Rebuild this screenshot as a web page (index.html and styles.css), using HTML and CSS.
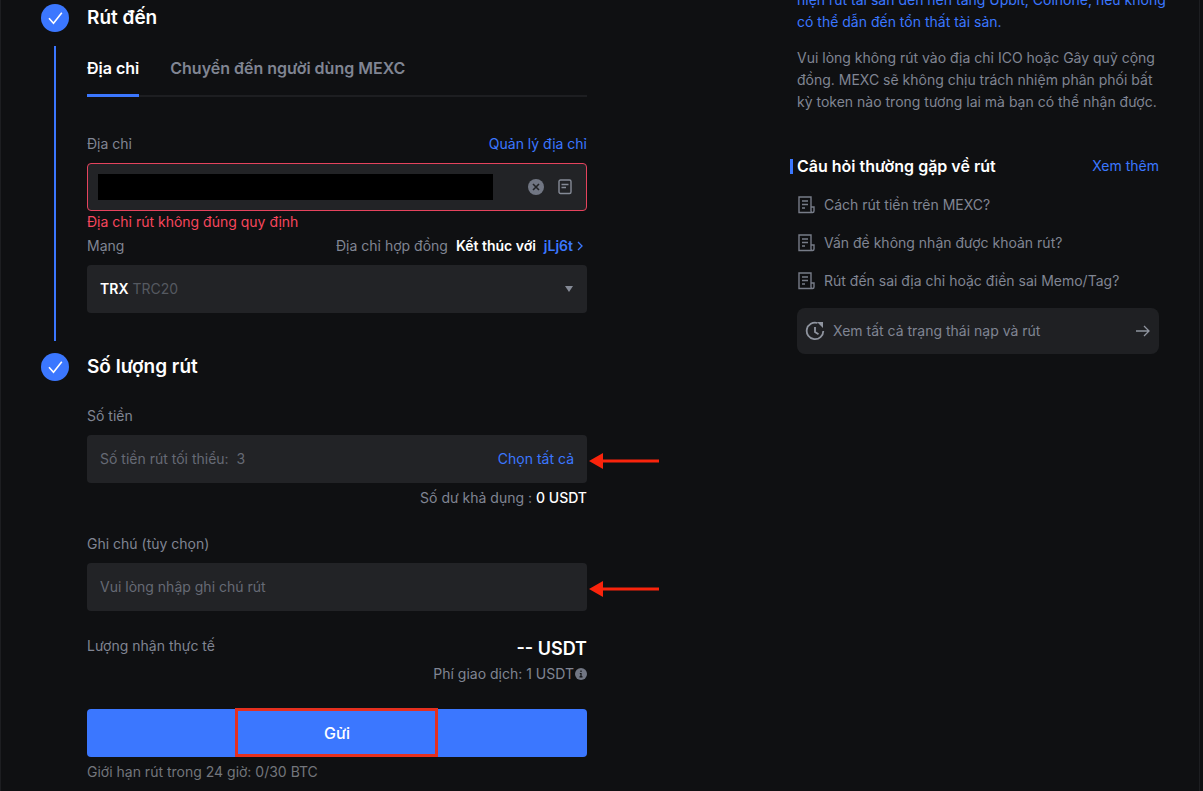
FILE: index.html
```html
<!DOCTYPE html>
<html lang="vi">
<head>
    <meta charset="UTF-8">
    <meta name="viewport" content="width=device-width, initial-scale=1.0">
    <title>Rút tiền</title>
    <link rel="stylesheet" href="styles.css">
</head>
<body>
    <div class="page">
        <!-- Withdraw form -->
        <main class="steps">
            <section class="step">
                <div class="step-marker">
                    <svg class="step-icon" viewBox="0 0 28 28">
                        <circle cx="14" cy="14" r="14" fill="#3b77ff"/>
                        <path d="M8 14.2l4.5 5L20.8 8.8" fill="none" stroke="#fff" stroke-width="1.6"/>
                    </svg>
                    <span class="step-line"></span>
                </div>
                <div class="step-body">
                    <h2>Rút đến</h2>
                    <div class="tabs">
                        <button type="button" class="tab active">Địa chỉ</button>
                        <button type="button" class="tab">Chuyển đến người dùng MEXC</button>
                    </div>

                    <div class="label-row">
                        <label for="address">Địa chỉ</label>
                        <a href="#">Quản lý địa chỉ</a>
                    </div>
                    <div class="field field-error">
                        <input type="text" id="address" class="address-input">
                        <button type="button" class="icon-btn" aria-label="Xóa">
                            <svg width="16" height="16" viewBox="0 0 16 16">
                                <circle cx="8" cy="8" r="8" fill="#717683"/>
                                <path d="M5 5l6 6M11 5l-6 6" stroke="#222326" stroke-width="1.6"/>
                            </svg>
                        </button>
                        <button type="button" class="icon-btn" aria-label="Sổ địa chỉ">
                            <svg width="14" height="16" viewBox="0 0 14 16" fill="none" stroke="#858a96" stroke-width="1.4">
                                <rect x="1" y="1" width="12" height="13.5" rx="1.5"/>
                                <path d="M3.5 5.500h7M3.5 8.500h4.500"/>
                            </svg>
                        </button>
                    </div>
                    <p class="error">Địa chỉ rút không đúng quy định</p>

                    <div class="label-row network-row">
                        <label for="network">Mạng</label>
                        <div class="contract">
                            <span>Địa chỉ hợp đồng</span>
                            <strong>Kết thúc với</strong>
                            <a href="#">jLj6t
                                <svg width="6" height="10" viewBox="0 0 6 10"><path d="M1 1l4 4-4 4" fill="none" stroke="#3b77ff" stroke-width="1.3"/></svg>
                            </a>
                        </div>
                    </div>
                    <div class="field">
                        <span class="coin">TRX</span>
                        <select id="network">
                            <option>TRC20</option>
                        </select>
                        <svg class="caret" width="10" height="6" viewBox="0 0 10 6"><path d="M1 0h8L5 6z" fill="#858a96"/></svg>
                    </div>
                </div>
            </section>

            <section class="step">
                <div class="step-marker">
                    <svg class="step-icon" viewBox="0 0 28 28">
                        <circle cx="14" cy="14" r="14" fill="#3b77ff"/>
                        <path d="M8 14.2l4.5 5L20.8 8.8" fill="none" stroke="#fff" stroke-width="1.6"/>
                    </svg>
                </div>
                <div class="step-body">
                    <h2>Số lượng rút</h2>
                    <div class="label-row amount-row">
                        <label for="amount">Số tiền</label>
                    </div>
                    <div class="field">
                        <input type="text" id="amount" placeholder="Số tiền rút tối thiểu:  3">
                        <button type="button" class="link-btn">Chọn tất cả</button>
                        <svg class="arrow" width="70" height="16" viewBox="0 0 70 16"><path d="M0 8L14 0v6.500h56v3H14V16z" fill="#f9240c"/></svg>
                    </div>
                    <p class="balance">Số dư khả dụng : <span>0 USDT</span></p>

                    <div class="label-row note-row">
                        <label for="note">Ghi chú (tùy chọn)</label>
                    </div>
                    <div class="field">
                        <input type="text" id="note" placeholder="Vui lòng nhập ghi chú rút">
                        <svg class="arrow" width="70" height="16" viewBox="0 0 70 16"><path d="M0 8L14 0v6.500h56v3H14V16z" fill="#f9240c"/></svg>
                    </div>

                    <div class="receive">
                        <span>Lượng nhận thực tế</span>
                        <div class="receive-values">
                            <strong>-- USDT</strong>
                            <p>Phí giao dịch: 1 USDT
                                <svg width="12" height="12" viewBox="0 0 12 12">
                                    <circle cx="6" cy="6" r="6" fill="#717683"/>
                                    <path d="M6 2.500v1.500M4.800 5.500H6v3M4.500 8.800h3" fill="none" stroke="#101113" stroke-width="1.200"/>
                                </svg>
                            </p>
                        </div>
                    </div>

                    <button type="submit" class="submit-btn">Gửi<span class="highlight"></span></button>
                    <p class="limit">Giới hạn rút trong 24 giờ: 0/30 BTC</p>
                </div>
            </section>
        </main>

        <!-- Notes and FAQ -->
        <aside class="sidebar">
            <p class="notice notice-blue">hiện rút tài sản đến nền tảng Upbit, Coinone, nếu không có thể dẫn đến tổn thất tài sản.</p>
            <p class="notice">Vui lòng không rút vào địa chỉ ICO hoặc Gây quỹ cộng đồng. MEXC sẽ không chịu trách nhiệm phân phối bất kỳ token nào trong tương lai mà bạn có thể nhận được.</p>

            <div class="faq-header">
                <h3>Câu hỏi thường gặp về rút</h3>
                <a href="#">Xem thêm</a>
            </div>
            <ul class="faq">
                <li><a href="#">
                    <svg width="18" height="18" viewBox="0 0 18 18"><path d="M14 11V1H2v15.500h13M14 11h3v4a1.500 1.500 0 0 1-3 0zM5 5h6M5 8.500h6M5 12h3"/></svg>
                    Cách rút tiền trên MEXC?</a></li>
                <li><a href="#">
                    <svg width="18" height="18" viewBox="0 0 18 18"><path d="M14 11V1H2v15.500h13M14 11h3v4a1.500 1.500 0 0 1-3 0zM5 5h6M5 8.500h6M5 12h3"/></svg>
                    Vấn đề không nhận được khoản rút?</a></li>
                <li><a href="#">
                    <svg width="18" height="18" viewBox="0 0 18 18"><path d="M14 11V1H2v15.500h13M14 11h3v4a1.500 1.500 0 0 1-3 0zM5 5h6M5 8.500h6M5 12h3"/></svg>
                    Rút đến sai địa chỉ hoặc điền sai Memo/Tag?</a></li>
            </ul>
            <a href="#" class="history">
                <svg width="20" height="20" viewBox="0 0 20 20" fill="none" stroke="#8f949f" stroke-width="1.800">
                    <path d="M12.500 2A8.300 8.300 0 1 0 18.300 10M10 6v5l3.500 2.200"/>
                    <path d="M12 1l6 0v6z" fill="#8f949f" stroke="none"/>
                </svg>
                <span>Xem tất cả trạng thái nạp và rút</span>
                <svg width="14" height="12" viewBox="0 0 14 12" fill="none" stroke="#8f949f" stroke-width="1.300"><path d="M0 6h13M8 1l5 5-5 5"/></svg>
            </a>
        </aside>
    </div>
</body>
</html>
```

FILE: styles.css
```css
* {
    margin: 0;
    padding: 0;
    box-sizing: border-box;
}

body {
    font-family: Inter, sans-serif;
    font-size: 14px;
    line-height: 22px;
    color: #808593;
    background-color: #0f1012;
}

a, .link-btn {
    color: #3b77ff;
    text-decoration: none;
}

button, input, select {
    font: inherit;
    color: inherit;
    background: none;
    border: none;
    outline: none;
}

button {
    cursor: pointer;
}

svg {
    display: block;
    flex-shrink: 0;
}

.page {
    display: flex;
    justify-content: space-between;
    gap: 40px;
    min-height: 100vh;
    margin-right: 3px;
    padding: 4px 40px 8px;
    border-left: 1px solid #1d1e21;
    border-right: 1px solid #1d1e21;
    overflow: hidden;
}

/* Steps */
.steps {
    flex: 0 1 546px;
}

.step {
    display: flex;
    gap: 18px;
}

.step-marker {
    display: flex;
    flex-direction: column;
    align-items: center;
}

.step-icon {
    width: 28px;
    height: 28px;
}

.step-line {
    flex: 1;
    width: 2px;
    margin: 14px 0 12px;
    background-color: #3b77ff;
}

.step-body {
    flex: 1;
    min-width: 0;
}

.step:first-child .step-body {
    padding-bottom: 40px;
}

h2 {
    font-size: 19px;
    line-height: 28px;
    font-weight: 600;
    color: #fff;
}

.tabs {
    display: flex;
    gap: 31px;
    margin: 24px 0 36px;
    box-shadow: inset 0 -2px #1d1e21;
}

.tab {
    padding-bottom: 14px;
    border-bottom: 3px solid transparent;
    font-size: 16px;
    line-height: 24px;
    font-weight: 600;
}

.tab.active {
    color: #fff;
    border-bottom-color: #3b77ff;
}

/* Form fields */
.label-row {
    display: flex;
    justify-content: space-between;
    margin-bottom: 8px;
}

.network-row {
    margin-top: 2px;
}

.amount-row,
.note-row {
    margin-top: 24px;
}

.field {
    position: relative;
    display: flex;
    align-items: center;
    height: 48px;
    padding: 0 13px;
    background-color: #222326;
    border-radius: 4px;
}

.field input {
    flex: 1;
    min-width: 0;
}

.field input::placeholder {
    color: #666a75;
}

.field-error {
    gap: 14px;
    padding: 0 14px 0 10px;
    border: 1px solid #e5435d;
}

.field .address-input {
    height: 26px;
    margin-right: 21px;
    background-color: #000;
}

.error {
    color: #f6465d;
}

.contract {
    display: flex;
    gap: 8px;
}

.contract strong {
    font-weight: 600;
    color: #fff;
}

.contract a {
    display: flex;
    align-items: center;
    gap: 4px;
    margin-right: 4px;
    font-weight: 600;
}

.coin {
    margin-right: 4px;
    font-weight: 600;
    color: #fff;
}

.field select {
    flex: 1;
    appearance: none;
    color: #555960;
}

.balance {
    margin-top: 4px;
    text-align: right;
}

.balance span {
    font-weight: 500;
    color: #fff;
}

.receive {
    display: flex;
    justify-content: space-between;
    margin: 24px 0;
}

.receive-values {
    text-align: right;
}

.receive-values strong {
    display: block;
    font-size: 18px;
    line-height: 28px;
    font-weight: 600;
    color: #fff;
}

.receive-values p {
    display: flex;
    align-items: center;
    gap: 1px;
}

.submit-btn {
    position: relative;
    display: block;
    width: 100%;
    height: 48px;
    font-size: 16px;
    font-weight: 500;
    color: #fff;
    background-color: #3b77ff;
    border-radius: 4px;
}

.limit {
    margin-top: 4px;
    color: #73767c;
}

/* Red markers drawn over the form */
.arrow {
    position: absolute;
    left: 100%;
    top: 18px;
    margin-left: 2px;
}

.highlight {
    position: absolute;
    top: -1px;
    bottom: 0;
    left: 50%;
    width: 203px;
    margin-left: -102px;
    border: 3px solid #e5301f;
}

/* Sidebar */
.sidebar {
    flex: 0 0 362px;
    margin-top: -15px;
}

.notice {
    margin-bottom: 14px;
}

.notice-blue {
    margin-right: -20px;
    color: #3b77ff;
}

.faq-header {
    display: flex;
    justify-content: space-between;
    align-items: center;
    margin: 41px 0 8px -7px;
}

h3 {
    display: flex;
    align-items: center;
    gap: 4px;
    font-size: 16px;
    line-height: 24px;
    font-weight: 600;
    color: #fff;
}

h3::before {
    content: "";
    width: 3px;
    height: 15px;
    background-color: #3b77ff;
}

.faq {
    list-style: none;
}

.faq a {
    display: flex;
    align-items: center;
    gap: 9px;
    height: 38px;
    color: #808593;
}

.faq svg {
    fill: none;
    stroke: #777c88;
    stroke-width: 1.4;
}

.history {
    display: flex;
    align-items: center;
    height: 46px;
    margin-top: 8px;
    padding: 0 9px 0 8px;
    gap: 8px;
    color: #808593;
    background-color: #1f2023;
    border-radius: 8px;
}

.history span {
    flex: 1;
}
```
